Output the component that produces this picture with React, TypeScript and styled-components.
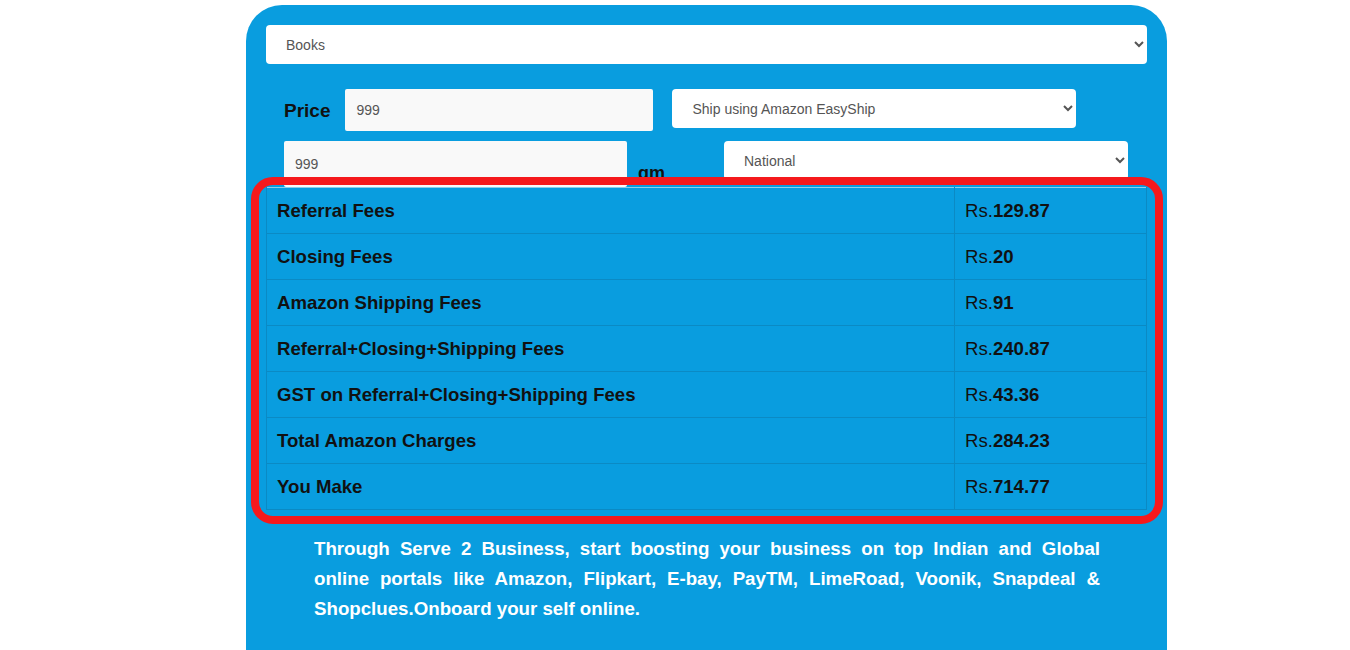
import styled, { createGlobalStyle } from 'styled-components';

const GlobalStyle = createGlobalStyle`
    body {
        margin: 0;
        background: #ffffff;
        font-family: "Liberation Sans", Arial, sans-serif;
    }
`;

const colors = {
    panel: '#099ddf',
    line: '#0b8ac4',
    text: '#111111',
    field: '#555555',
    mark: '#f5191c',
};

const Page = styled.div`
    padding: 5px 0 0 246px;
`;

const Panel = styled.div`
    width: 921px;
    min-height: 645px;
    box-sizing: border-box;
    background-color: ${colors.panel};
    border-radius: 36px 36px 0 0;
    padding: 20px 20px 0 20px;
`;

const Select = styled.select<{ width?: number }>`
    display: block;
    width: ${props => props.width ? `${props.width}px` : '100%'};
    height: 39px;
    box-sizing: border-box;
    border: none;
    border-radius: 4px;
    background-color: #ffffff;
    color: ${colors.field};
    font-family: "Liberation Sans", Arial, sans-serif;
    font-size: 14px;
    padding: 0 10px 0 16px;
    outline: none;
`;

const Input = styled.input<{ width: number; tall: number }>`
    display: block;
    width: ${props => props.width}px;
    height: ${props => props.tall}px;
    box-sizing: border-box;
    border: none;
    border-radius: 2px;
    background-color: #f9f9f9;
    color: ${colors.field};
    font-family: "Liberation Sans", Arial, sans-serif;
    font-size: 14px;
    padding: 0 11px;
    outline: none;
`;

const Row = styled.div<{ top: number; tall: number }>`
    display: flex;
    align-items: flex-start;
    margin-top: ${props => props.top}px;
    padding-left: 18px;
    height: ${props => props.tall}px;
`;

const Label = styled.span`
    align-self: center;
    font-size: 19px;
    font-weight: bold;
    color: ${colors.text};
    margin: 2px 15px 0 0;
`;

const Unit = styled.span`
    align-self: flex-end;
    font-size: 18px;
    font-weight: bold;
    color: ${colors.text};
    line-height: 20px;
    margin: 0 59px 4px 11px;
`;

const Gap = styled.div<{ w: number }>`
    width: ${props => props.w}px;
    flex-shrink: 0;
`;

const TableWrap = styled.div`
    position: relative;
`;

const Marker = styled.div`
    position: absolute;
    left: -15px;
    top: -10px;
    right: -16px;
    bottom: -14px;
    border: 8px solid ${colors.mark};
    border-radius: 22px;
    pointer-events: none;
`;

const Table = styled.table`
    width: 100%;
    border-collapse: collapse;
    border-top: 1px solid #8fcdea;
`;

const Cell = styled.td<{ value?: boolean }>`
    height: 46px;
    box-sizing: border-box;
    padding: 0 10px;
    border: 1px solid ${colors.line};
    border-top: none;
    font-size: 18.6px;
    color: ${colors.text};
    width: ${props => props.value ? '192px' : 'auto'};
    font-weight: ${props => props.value ? 'normal' : 'bold'};
    vertical-align: middle;

    b {
        font-weight: bold;
    }
`;

const Note = styled.p`
    margin: 24px 0 0 48px;
    width: 786px;
    color: #ffffff;
    font-size: 18.7px;
    font-weight: bold;
    line-height: 30px;
    text-align: justify;
`;

const fees = [
    { label: 'Referral Fees', value: '129.87' },
    { label: 'Closing Fees', value: '20' },
    { label: 'Amazon Shipping Fees', value: '91' },
    { label: 'Referral+Closing+Shipping Fees', value: '240.87' },
    { label: 'GST on Referral+Closing+Shipping Fees', value: '43.36' },
    { label: 'Total Amazon Charges', value: '284.23' },
    { label: 'You Make', value: '714.77' },
];

const App = () => {
    return (
        <Page>
            <GlobalStyle />
            <Panel>
                <Select defaultValue="books">
                    <option value="books">Books</option>
                </Select>
                <Row top={25} tall={42}>
                    <Label>Price</Label>
                    <Input width={308} tall={42} defaultValue="999" />
                    <Gap w={19} />
                    <Select width={404} defaultValue="easyship">
                        <option value="easyship">Ship using Amazon EasyShip</option>
                    </Select>
                </Row>
                <Row top={10} tall={46}>
                    <Input width={343} tall={46} defaultValue="999" />
                    <Unit>gm</Unit>
                    <Select width={404} defaultValue="national">
                        <option value="national">National</option>
                    </Select>
                </Row>
                <TableWrap>
                    <Table>
                        <tbody>
                            {fees.map((fee, index) => (
                                <tr key={index}>
                                    <Cell>{fee.label}</Cell>
                                    <Cell value>Rs.<b>{fee.value}</b></Cell>
                                </tr>
                            ))}
                        </tbody>
                    </Table>
                    <Marker />
                </TableWrap>
                <Note>
                    Through Serve 2 Business, start boosting your business on top Indian and Global online portals like Amazon, Flipkart, E-bay, PayTM, LimeRoad, Voonik, Snapdeal &amp; Shopclues.Onboard your self online.
                </Note>
            </Panel>
        </Page>
    );
};

export default App;
